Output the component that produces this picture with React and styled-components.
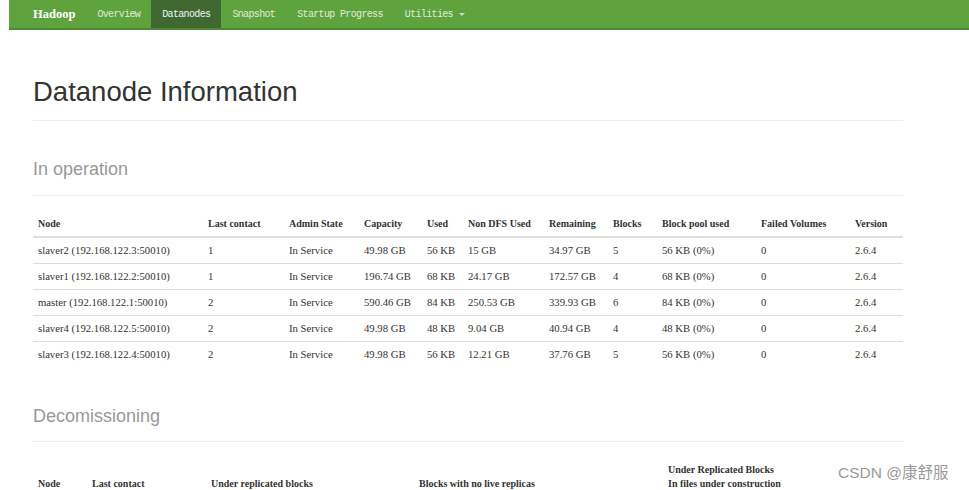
import React from "react";
import styled, { createGlobalStyle } from "styled-components";

const GlobalStyle = createGlobalStyle`
  html, body {
    margin: 0;
    padding: 0;
    background: #fff;
    overflow: hidden;
  }
  body {
    font-family: "Liberation Sans", Arial, sans-serif;
    color: #333;
  }
`;

const NAV_ITEMS = [
  { label: "Overview" },
  { label: "Datanodes", active: true },
  { label: "Snapshot" },
  { label: "Startup Progress" },
  { label: "Utilities", dropdown: true }
];

const LIVE_COLUMNS = [
  { title: "Node", width: 170 },
  { title: "Last contact", width: 81 },
  { title: "Admin State", width: 75 },
  { title: "Capacity", width: 63 },
  { title: "Used", width: 41 },
  { title: "Non DFS Used", width: 81 },
  { title: "Remaining", width: 64 },
  { title: "Blocks", width: 49 },
  { title: "Block pool used", width: 99 },
  { title: "Failed Volumes", width: 94 },
  { title: "Version", width: 53 }
];

const LIVE_NODES = [
  ["slaver2 (192.168.122.3:50010)", "1", "In Service", "49.98 GB", "56 KB", "15 GB", "34.97 GB", "5", "56 KB (0%)", "0", "2.6.4"],
  ["slaver1 (192.168.122.2:50010)", "1", "In Service", "196.74 GB", "68 KB", "24.17 GB", "172.57 GB", "4", "68 KB (0%)", "0", "2.6.4"],
  ["master (192.168.122.1:50010)", "2", "In Service", "590.46 GB", "84 KB", "250.53 GB", "339.93 GB", "6", "84 KB (0%)", "0", "2.6.4"],
  ["slaver4 (192.168.122.5:50010)", "2", "In Service", "49.98 GB", "48 KB", "9.04 GB", "40.94 GB", "4", "48 KB (0%)", "0", "2.6.4"],
  ["slaver3 (192.168.122.4:50010)", "2", "In Service", "49.98 GB", "56 KB", "12.21 GB", "37.76 GB", "5", "56 KB (0%)", "0", "2.6.4"]
];

const DECOM_COLUMNS = [
  { title: ["Node"], width: 54 },
  { title: ["Last contact"], width: 119 },
  { title: ["Under replicated blocks"], width: 208 },
  { title: ["Blocks with no live replicas"], width: 249 },
  { title: ["Under Replicated Blocks", "In files under construction"], width: 240 }
];

const Navbar = styled.nav`
  margin-left: 9px;
  height: 28px;
  background: #5fa33e;
  border-bottom: 2px solid #4c8a30;
  display: flex;
  align-items: stretch;
  padding-left: 24px;
`;

const Brand = styled.a`
  display: flex;
  align-items: center;
  padding-right: 11px;
  font-family: "Liberation Serif", "Times New Roman", serif;
  font-weight: bold;
  font-size: 12.5px;
  color: #fff;
  text-decoration: none;
`;

const NavLink = styled.a`
  display: flex;
  align-items: center;
  gap: 6px;
  padding: 0 11px;
  font-family: "Liberation Mono", "Courier New", monospace;
  font-size: 10px;
  letter-spacing: -0.65px;
  color: ${props => (props.$active ? "#f2f2f2" : "#e1ebda")};
  background: ${props => (props.$active ? "#3f6930" : "transparent")};
  text-decoration: none;
`;

const Caret = styled.span`
  display: inline-block;
  width: 0;
  height: 0;
  border-left: 3px solid transparent;
  border-right: 3px solid transparent;
  border-top: 3px solid #c9dcc0;
`;

const Container = styled.main`
  width: 870px;
  margin-left: 33px;
`;

const PageHeader = styled.header`
  margin-top: 47px;
  padding-bottom: 13px;
  border-bottom: 1px solid #eee;
`;

const Title = styled.h1`
  margin: 0;
  font-size: 27.5px;
  line-height: 30px;
  font-weight: normal;
  color: #333;
`;

const SectionHeader = styled.div`
  margin-top: ${props => props.$gap}px;
  padding-bottom: ${props => props.$pad}px;
  border-bottom: 1px solid #eee;
`;

const SectionTitle = styled.h2`
  margin: 0;
  font-size: 18px;
  line-height: 20px;
  font-weight: normal;
  color: #999;
`;

const Table = styled.table`
  width: 870px;
  margin-top: 16px;
  border-collapse: collapse;
  table-layout: fixed;
  font-family: "Liberation Serif", "Times New Roman", serif;
  color: #333;
`;

const Th = styled.th`
  padding: 5px;
  text-align: left;
  vertical-align: bottom;
  font-size: 10px;
  line-height: 14px;
  font-weight: bold;
  white-space: nowrap;
  border-bottom: 2px solid #ddd;
`;

const Td = styled.td`
  padding: 6px 5px;
  font-size: 10.7px;
  line-height: 13px;
  white-space: nowrap;
  border-top: 1px solid #ddd;
`;

const Row = styled.tr`
  &:first-child td {
    border-top: none;
  }
`;

const Watermark = styled.div`
  position: absolute;
  left: 838px;
  top: 460px;
  font-family: "Liberation Sans", Arial, "Noto Sans CJK SC", sans-serif;
  font-size: 15.5px;
  color: #9a9a9a;
  white-space: nowrap;
`;

function App() {
  return (
    <>
      <GlobalStyle />
      <Navbar>
        <Brand href="#">Hadoop</Brand>
        {NAV_ITEMS.map(item => (
          <NavLink key={item.label} href="#" $active={item.active}>
            {item.label}
            {item.dropdown && <Caret />}
          </NavLink>
        ))}
      </Navbar>
      <Container>
        <PageHeader>
          <Title>Datanode Information</Title>
        </PageHeader>

        <SectionHeader $gap={38} $pad={16}>
          <SectionTitle>In operation</SectionTitle>
        </SectionHeader>
        <Table>
          <colgroup>
            {LIVE_COLUMNS.map(col => (
              <col key={col.title} style={{ width: col.width }} />
            ))}
          </colgroup>
          <thead>
            <tr>
              {LIVE_COLUMNS.map(col => (
                <Th key={col.title}>{col.title}</Th>
              ))}
            </tr>
          </thead>
          <tbody>
            {LIVE_NODES.map(node => (
              <Row key={node[0]}>
                {node.map((cell, i) => (
                  <Td key={i}>{cell}</Td>
                ))}
              </Row>
            ))}
          </tbody>
        </Table>

        <SectionHeader $gap={39} $pad={15}>
          <SectionTitle>Decomissioning</SectionTitle>
        </SectionHeader>
        <Table>
          <colgroup>
            {DECOM_COLUMNS.map(col => (
              <col key={col.title[0]} style={{ width: col.width }} />
            ))}
          </colgroup>
          <thead>
            <tr>
              {DECOM_COLUMNS.map(col => (
                <Th key={col.title[0]}>
                  {col.title.map((line, i) => (
                    <React.Fragment key={line}>
                      {i > 0 && <br />}
                      {line}
                    </React.Fragment>
                  ))}
                </Th>
              ))}
            </tr>
          </thead>
          <tbody />
        </Table>
      </Container>
      <Watermark>CSDN @康舒服</Watermark>
    </>
  );
}

export default App;
